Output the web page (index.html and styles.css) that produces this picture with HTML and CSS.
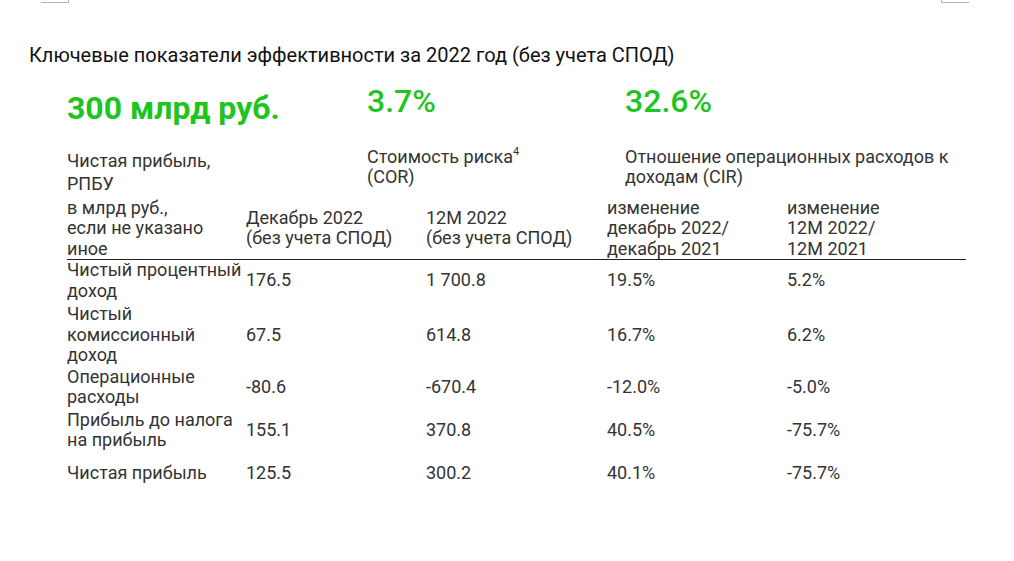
FILE: index.html
```html
<!DOCTYPE html>
<html lang="ru">
<head>
<meta charset="utf-8">
<title>Ключевые показатели</title>
<link rel="stylesheet" href="styles.css">
</head>
<body>
<div class="page">
  <div class="marks"><span class="mark mark-l"></span><span class="mark mark-r"></span></div>
  <h1 class="title">Ключевые показатели эффективности за 2022 год (без учета СПОД)</h1>
  <div class="content">
    <div class="stats">
      <div class="stat stat-main">
        <div class="big big-bold">300 млрд руб.</div>
        <div class="desc">Чистая прибыль,<br>РПБУ</div>
      </div>
      <div class="stat">
        <div class="big">3.7%</div>
        <div class="desc">Стоимость риска<sup>4</sup><br>(COR)</div>
      </div>
      <div class="stat">
        <div class="big">32.6%</div>
        <div class="desc">Отношение операционных расходов к<br>доходам (CIR)</div>
      </div>
    </div>
    <table class="kpi">
      <colgroup>
        <col class="c1"><col class="c2"><col class="c3"><col class="c4"><col class="c5">
      </colgroup>
      <thead>
        <tr>
          <th>в млрд руб.,<br>если не указано<br>иное</th>
          <th>Декабрь 2022<br>(без учета СПОД)</th>
          <th>12M 2022<br>(без учета СПОД)</th>
          <th>изменение<br>декабрь 2022/<br>декабрь 2021</th>
          <th>изменение<br>12M 2022/<br>12M 2021</th>
        </tr>
      </thead>
      <tbody>
        <tr class="r1">
          <td>Чистый процентный<br>доход</td>
          <td>176.5</td><td>1 700.8</td><td>19.5%</td><td>5.2%</td>
        </tr>
        <tr class="r2">
          <td>Чистый<br>комиссионный<br>доход</td>
          <td>67.5</td><td>614.8</td><td>16.7%</td><td>6.2%</td>
        </tr>
        <tr class="r3">
          <td>Операционные<br>расходы</td>
          <td>-80.6</td><td>-670.4</td><td>-12.0%</td><td>-5.0%</td>
        </tr>
        <tr class="r4">
          <td>Прибыль до налога<br>на прибыль</td>
          <td>155.1</td><td>370.8</td><td>40.5%</td><td>-75.7%</td>
        </tr>
        <tr class="last">
          <td>Чистая прибыль</td>
          <td>125.5</td><td>300.2</td><td>40.1%</td><td>-75.7%</td>
        </tr>
      </tbody>
    </table>
  </div>
</div>
</body>
</html>
```

FILE: styles.css
```css
* { box-sizing: border-box; }

html, body {
  margin: 0;
  padding: 0;
  background: #ffffff;
}

body {
  font-family: Roboto, "Noto Sans", "Liberation Sans", sans-serif;
  color: #333333;
  width: 1014px;
  height: 561px;
  overflow: hidden;
}

.page {
  display: flex;
  flex-direction: column;
}

.marks {
  display: flex;
  justify-content: space-between;
  padding: 0 45px 0 41px;
  height: 3px;
}

.mark {
  display: block;
  width: 28px;
  height: 3px;
  border-bottom: 1px solid #b4b4b4;
}

.mark-l { border-right: 1px solid #b4b4b4; }
.mark-r { border-left: 1px solid #b4b4b4; }

.title {
  margin: 40px 0 0 0;
  padding-left: 29px;
  font-size: 20px;
  line-height: 24px;
  font-weight: 400;
  color: #111111;
}

.content {
  padding-left: 67px;
  margin-top: 14px;
}

.stats {
  display: grid;
  grid-template-columns: 300px 258px 341px;
  align-items: start;
}

.big {
  font-size: 32px;
  line-height: 40px;
  font-weight: 500;
  color: #1fc41f;
  white-space: nowrap;
}

.big-bold {
  font-weight: 700;
  padding-top: 7px;
}

.desc {
  font-size: 18px;
  line-height: 20.5px;
  margin-top: 25.5px;
  white-space: nowrap;
}

.stat-main .desc {
  margin-top: 20.5px;
  line-height: 23px;
}

.desc sup {
  font-size: 11px;
  line-height: 0;
  vertical-align: 8px;
}

.kpi {
  margin-top: 3px;
  width: 899px;
  table-layout: fixed;
  border-collapse: collapse;
  font-size: 18px;
  line-height: 20.5px;
}

.kpi .c1 { width: 179px; }
.kpi .c2 { width: 180px; }
.kpi .c3 { width: 181px; }
.kpi .c4 { width: 180px; }
.kpi .c5 { width: 179px; }

.kpi th,
.kpi td {
  padding: 0;
  text-align: left;
  vertical-align: middle;
  font-weight: 400;
  white-space: nowrap;
  color: #333333;
}

.kpi thead th {
  border-bottom: 1px solid #222222;
}

.kpi tr.r1 td { padding-bottom: 3px; }
.kpi tr.r2 td { padding-bottom: 1px; }
.kpi tr.r3 td { padding-bottom: 2px; }
.kpi tr.r4 td { padding-bottom: 3px; }

.kpi tr.last td {
  padding-top: 9px;
}
```
